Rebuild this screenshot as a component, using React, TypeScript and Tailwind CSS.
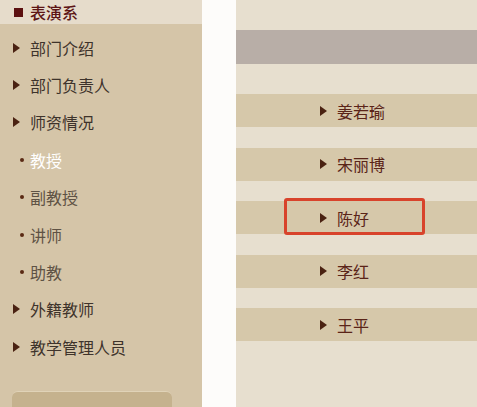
import React from "react";

const font = { fontFamily: '"Noto Sans CJK SC", "Noto Sans", sans-serif' };

function Tri({ color = "#4a2212" }: { color?: string }) {
  return (
    <svg width="7" height="10" viewBox="0 0 7 10" className="shrink-0">
      <polygon points="0,0 7,5 0,10" fill={color} />
    </svg>
  );
}

const leftItems: { t: string; kind: "main" | "sub"; active?: boolean }[] = [
  { t: "部门介绍", kind: "main" },
  { t: "部门负责人", kind: "main" },
  { t: "师资情况", kind: "main" },
  { t: "教授", kind: "sub", active: true },
  { t: "副教授", kind: "sub" },
  { t: "讲师", kind: "sub" },
  { t: "助教", kind: "sub" },
  { t: "外籍教师", kind: "main" },
  { t: "教学管理人员", kind: "main" },
];

const names = ["姜若瑜", "宋丽博", "陈好", "李红", "王平"];

export default function App() {
  return (
    <div className="flex w-[477px] h-[407px] overflow-hidden bg-[#fdfcfa]" style={font}>
      <div className="w-[202px] h-full flex flex-col bg-[#d5c5a8]">
        <div className="h-[24px] bg-[#e6dccb] flex items-center pl-[14px] gap-[7px]">
          <div className="w-[9px] h-[9px] bg-[#5c1010]" />
          <span className="text-[16px] leading-none font-medium text-[#5c1414]">表演系</span>
        </div>
        <div className="flex flex-col pt-[5px]">
          {leftItems.map((it) => (
            <div key={it.t} className="h-[37.4px] flex items-center">
              {it.kind === "main" ? (
                <div className="w-[30px] pl-[13px] flex items-center">
                  <Tri />
                </div>
              ) : (
                <div className="w-[30px] pl-[20px] flex items-center">
                  <div className="w-[4px] h-[4px] rounded-full bg-[#5a2a14]" />
                </div>
              )}
              <span
                className={
                  "text-[16px] leading-none " +
                  (it.active
                    ? "text-white"
                    : it.kind === "main"
                    ? "text-[#3e332b]"
                    : "text-[#5e5244]")
                }
              >
                {it.t}
              </span>
            </div>
          ))}
        </div>
        <div className="flex-1" />
        <div className="ml-[12px] w-[160px] h-[16px] rounded-t-[6px] bg-[#c5b28e] border-t border-[#e0d3b8]" />
      </div>
      <div className="w-[34px]" />
      <div className="flex-1 h-full bg-[#e7dfcf] flex flex-col">
        <div className="h-[30px]" />
        <div className="h-[34px] bg-[#b8aea7]" />
        <div className="h-[30px]" />
        <div className="flex flex-col gap-[20.5px]">
          {names.map((n, i) => (
            <div key={n} className="relative h-[33px] bg-[#d6c8aa] flex items-center pl-[84px] gap-[10px]">
              <Tri color="#4a2212" />
              <span className="text-[16px] leading-none text-[#5a2418]">{n}</span>
              {i === 2 && (
                <div className="absolute left-[48px] top-[-3px] w-[141px] h-[37px] border-[3px] border-[#d8432b] rounded-[3px]" />
              )}
            </div>
          ))}
        </div>
      </div>
    </div>
  );
}
